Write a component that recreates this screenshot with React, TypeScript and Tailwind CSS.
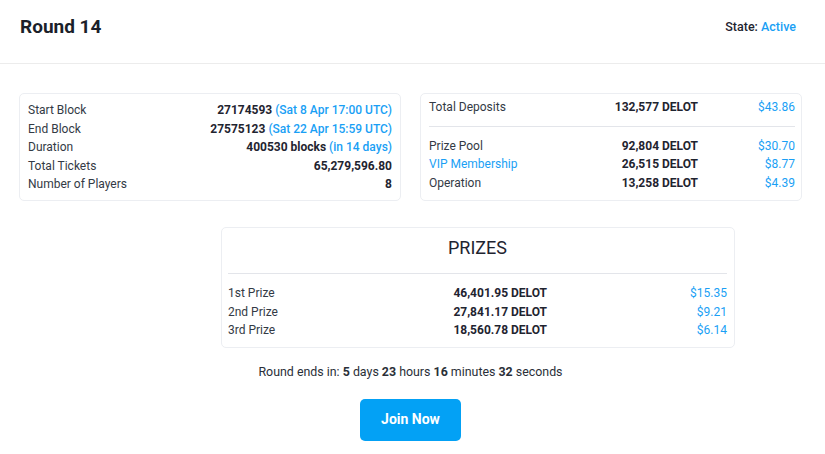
import React from "react";

const blue = "text-[#1a9ff5]";

function InfoRow({ label, value, note }: { label: string; value: string; note?: string }) {
  return (
    <div className="flex items-center justify-between h-[18.5px]">
      <span className="text-[#333a45]">{label}</span>
      <span className="font-bold text-[#1f2430]">
        {value}
        {note && <span className={`font-medium ${blue}`}> {note}</span>}
      </span>
    </div>
  );
}

function PoolRow({ label, delot, usd, link }: { label: string; delot: string; usd: string; link?: boolean }) {
  return (
    <div className="grid grid-cols-[1fr_150px_97px] items-center h-[18.5px]">
      <span className={link ? blue : "text-[#333a45]"}>{label}</span>
      <span className="text-right font-bold text-[#1f2430]">{delot}</span>
      <span className={`text-right ${blue}`}>{usd}</span>
    </div>
  );
}

function PrizeRow({ label, delot, usd }: { label: string; delot: string; usd: string }) {
  return (
    <div className="grid grid-cols-[1fr_200px_180px] items-center h-[18.5px]">
      <span className="text-[#333a45]">{label}</span>
      <span className="text-right font-bold text-[#1f2430]">{delot}</span>
      <span className={`text-right ${blue}`}>{usd}</span>
    </div>
  );
}

export default function App() {
  return (
    <div className="w-[825px] h-[454px] bg-white text-[12px] font-['Roboto',sans-serif] text-[#1f2430]">
      <header className="h-[64px] flex items-center justify-between pl-5 pr-[29px] border-b border-[#ececec]">
        <h1 className="text-[19px] font-bold text-[#1b1f2a] -mt-[8px]">Round 14</h1>
        <div className="text-[12.5px] font-medium -mt-[9px]">
          State: <span className={blue}>Active</span>
        </div>
      </header>

      <div className="flex gap-[19px] pl-[19px] pr-[23px] pt-[29px]">
        <div className="w-[382px] h-[108px] border border-[#eceef2] rounded-[5px] px-2 pt-[7px]">
          <InfoRow label="Start Block" value="27174593" note="(Sat 8 Apr 17:00 UTC)" />
          <InfoRow label="End Block" value="27575123" note="(Sat 22 Apr 15:59 UTC)" />
          <InfoRow label="Duration" value="400530 blocks" note="(in 14 days)" />
          <InfoRow label="Total Tickets" value="65,279,596.80" />
          <InfoRow label="Number of Players" value="8" />
        </div>

        <div className="flex-1 h-[108px] border border-[#eceef2] rounded-[5px] pl-2 pr-[6px] pt-[4px]">
          <PoolRow label="Total Deposits" delot="132,577 DELOT" usd="$43.86" />
          <div className="border-t border-[#e3e5ea] mt-[9px] mb-[10px]" />
          <PoolRow label="Prize Pool" delot="92,804 DELOT" usd="$30.70" />
          <PoolRow label="VIP Membership" delot="26,515 DELOT" usd="$8.77" link />
          <PoolRow label="Operation" delot="13,258 DELOT" usd="$4.39" />
        </div>
      </div>

      <div className="pt-[26px] pl-[221px]">
        <div className="w-[514px] h-[121px] border border-[#eceef2] rounded-[5px] pl-[6px] pr-[7px]">
          <div className="text-center text-[18px] text-[#1f2430] h-[45px] pt-[6px]">PRIZES</div>
          <div className="border-t border-[#e3e5ea] mb-[10px]" />
          <PrizeRow label="1st Prize" delot="46,401.95 DELOT" usd="$15.35" />
          <PrizeRow label="2nd Prize" delot="27,841.17 DELOT" usd="$9.21" />
          <PrizeRow label="3rd Prize" delot="18,560.78 DELOT" usd="$6.14" />
        </div>
      </div>

      <div className="text-center text-[12.4px] pt-[15px] pr-[4px] text-[#2a2f38]">
        Round ends in: <span className="font-bold">5</span> days <span className="font-bold">23</span> hours{" "}
        <span className="font-bold">16</span> minutes <span className="font-bold">32</span> seconds
      </div>

      <div className="flex justify-center pt-[17px] pr-[4px]">
        <button className="w-[101px] h-[42px] rounded-[5px] bg-[#03a1f5] text-white text-[14px] font-bold">
          Join Now
        </button>
      </div>
    </div>
  );
}
